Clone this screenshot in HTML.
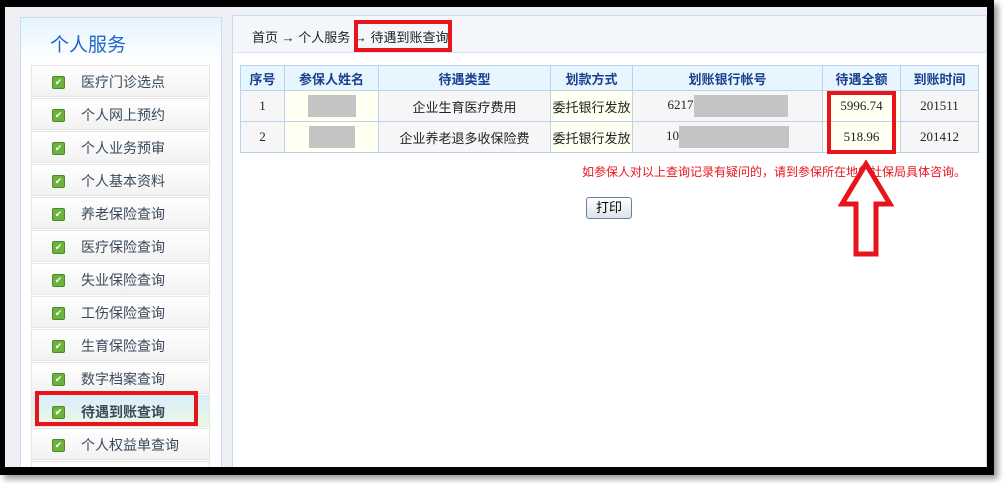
<!DOCTYPE html>
<html><head><meta charset="utf-8"><style>
*{margin:0;padding:0;box-sizing:border-box}
body{width:1006px;height:483px;background:#fff;position:relative;overflow:hidden;font-family:"Liberation Sans","Noto Sans CJK SC",sans-serif}
.frame{position:absolute;left:0;top:0;width:994px;height:475px;background:#000;box-shadow:4px 4px 6px #999}
.inner{position:absolute;left:5px;top:7px;width:982px;height:460px;background:#eef0f3;overflow:hidden}
.side{position:absolute;left:15px;top:10px;width:202px;height:460px;background:#fff;border:1px solid #c9dcf3}
.side .title{height:44px;background:linear-gradient(#e4f4fd,#fff);color:#2367c4;font-size:19px;padding:12px 0 0 29px}
.item{position:absolute;left:26px;width:179px;height:32px;border:1px solid #e6e6e6;background:linear-gradient(#fff,#f2f2f2);font-size:14px;color:#3a4a5c}
.item .cb{position:absolute;left:20px;top:10px;width:13px;height:13px;background:#6cb23d;border:1px solid #4a8a2a;border-radius:2px;color:#fff;font-size:9px;line-height:11px;text-align:center}
.item span{position:absolute;left:49px;top:6px}
.main{position:absolute;left:227px;top:8px;width:755px;height:460px;background:#fff;border:1px solid #c9dcf3}
.crumb{height:37px;background:#f3f6fa;border-bottom:1px solid #d6e3f2;font-size:13px;color:#222;padding:11px 0 0 19px}
table{position:absolute;left:7px;top:49px;border-collapse:collapse;font-size:13px;font-family:"Liberation Serif","Noto Sans CJK SC",serif}
td,th{border:1px solid #b9d3ef;text-align:center}
th{height:25px;background:#e7f6fe;color:#1b3f8f;font-family:"Liberation Sans","Noto Sans CJK SC",sans-serif;font-size:13px}
td{height:31px;background:#f6f6f6;color:#222}
td.y{background:#fffff2}
.blur{display:inline-block;background:#c4c4c4;height:22px;vertical-align:middle}
.red{position:absolute;border:4px solid #e8141c}
</style></head><body>
<div class="frame"></div>
<div class="inner">
<div class="side"><div class="title">个人服务</div></div>
<div class="item" style="top:58px"><div class="cb">✔</div><span>医疗门诊选点</span></div>
<div class="item" style="top:91px"><div class="cb">✔</div><span>个人网上预约</span></div>
<div class="item" style="top:124px"><div class="cb">✔</div><span>个人业务预审</span></div>
<div class="item" style="top:157px"><div class="cb">✔</div><span>个人基本资料</span></div>
<div class="item" style="top:190px"><div class="cb">✔</div><span>养老保险查询</span></div>
<div class="item" style="top:223px"><div class="cb">✔</div><span>医疗保险查询</span></div>
<div class="item" style="top:256px"><div class="cb">✔</div><span>失业保险查询</span></div>
<div class="item" style="top:289px"><div class="cb">✔</div><span>工伤保险查询</span></div>
<div class="item" style="top:322px"><div class="cb">✔</div><span>生育保险查询</span></div>
<div class="item" style="top:355px"><div class="cb">✔</div><span>数字档案查询</span></div>
<div class="item" style="top:388px;background:linear-gradient(#d9eefa,#eef7e6);font-weight:bold"><div class="cb">✔</div><span>待遇到账查询</span></div>
<div class="item" style="top:421px"><div class="cb">✔</div><span>个人权益单查询</span></div>
<div class="item" style="top:454px"></div>
<div class="main">
<div class="crumb">首页 → 个人服务 → 待遇到账查询</div>
<table>
<tr><th style="width:44px">序号</th><th style="width:94px">参保人姓名</th><th style="width:172px">待遇类型</th><th style="width:82px">划款方式</th><th style="width:190px">划账银行帐号</th><th style="width:78px">待遇全额</th><th style="width:78px">到账时间</th></tr>
<tr><td>1</td><td class="y"><span class="blur" style="width:48px"></span></td><td>企业生育医疗费用</td><td class="y">委托银行发放</td><td>6217<span class="blur" style="width:94px"></span></td><td class="y">5996.74</td><td>201511</td></tr>
<tr><td>2</td><td class="y"><span class="blur" style="width:46px"></span></td><td>企业养老退多收保险费</td><td class="y">委托银行发放</td><td>10<span class="blur" style="width:110px"></span></td><td class="y">518.96</td><td>201412</td></tr>
</table>
<div style="position:absolute;left:349px;top:147px;font-size:12px;color:#e8141c">如参保人对以上查询记录有疑问的，请到参保所在地的社保局具体咨询。</div>
<div style="position:absolute;left:353px;top:181px;width:46px;height:22px;border:1px solid #6a7f99;border-radius:3px;background:linear-gradient(#fff,#dde3ea);font-size:13px;text-align:center;line-height:20px">打印</div>
</div>
</div>
<div class="red" style="left:354px;top:20px;width:98px;height:32px"></div>
<div class="red" style="left:827px;top:91px;width:69px;height:63px"></div>
<div class="red" style="left:35px;top:391px;width:163px;height:35px"></div>
<svg style="position:absolute;left:838px;top:160px" width="56" height="98"><path d="M28 4 L52 44 L38 44 L38 94 L18 94 L18 44 L4 44 Z" fill="#fff" stroke="#e8141c" stroke-width="5" stroke-linejoin="miter"/></svg>
</body></html>
